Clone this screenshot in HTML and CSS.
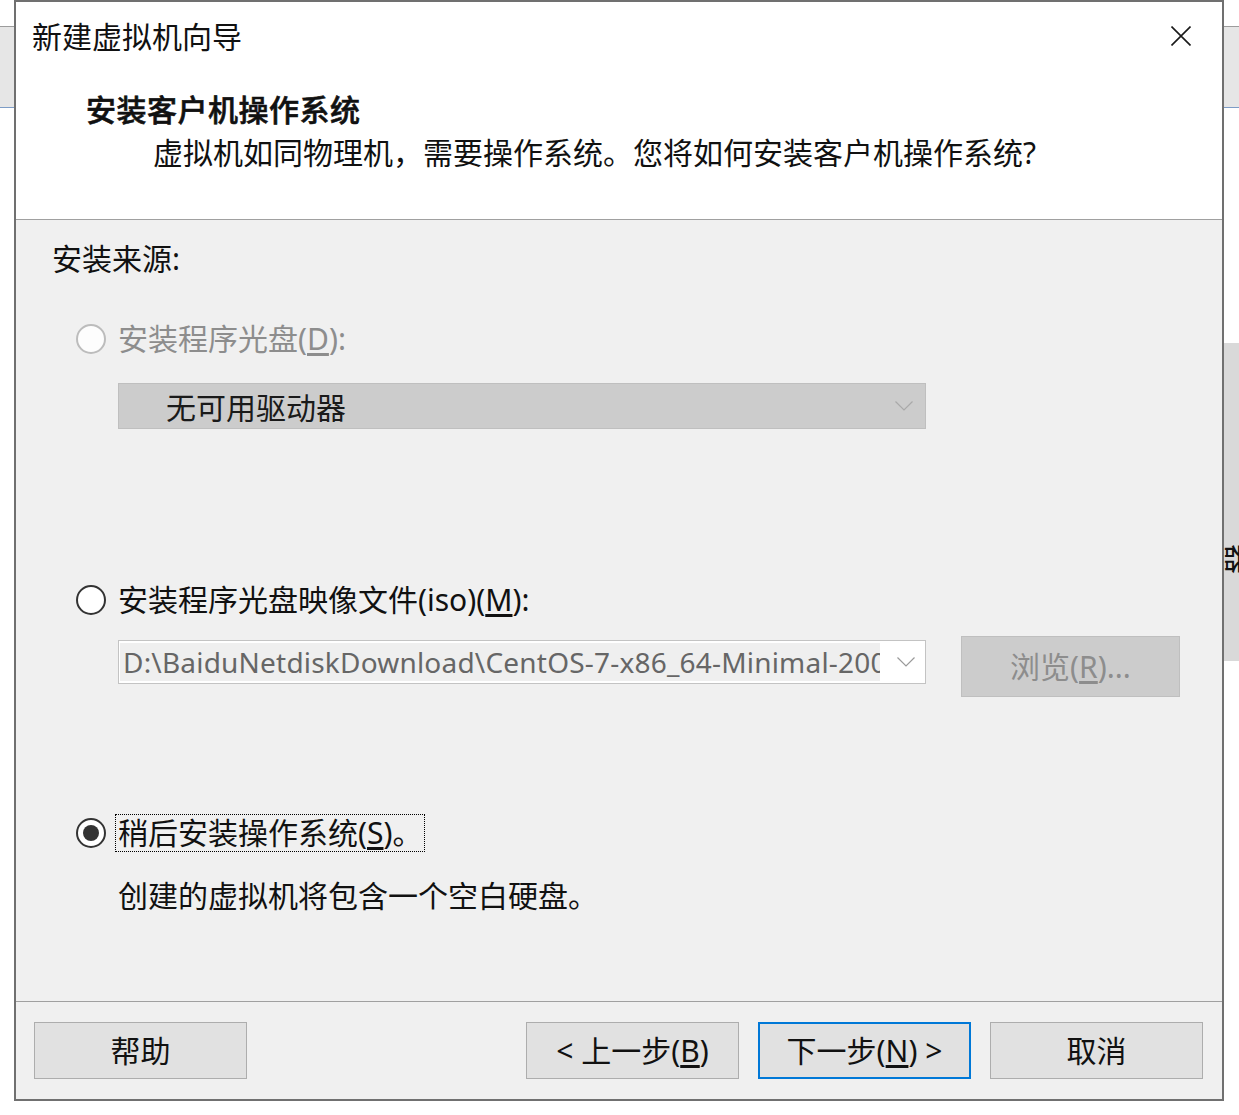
FILE: index.html
```html
<!DOCTYPE html>
<html lang="zh-CN">
<head>
<meta charset="utf-8">
<title>新建虚拟机向导</title>
<link rel="stylesheet" href="styles.css">
</head>
<body>
<div class="screen">
  <div class="side side-left"><div class="band"></div></div>
  <div class="dialog">
    <header class="head">
      <div class="titlebar">
        <span class="title">新建虚拟机向导</span>
        <svg class="close" width="20" height="20" viewBox="0 0 20 20"><path d="M0.5 0.5 L19.5 19.5 M19.5 0.5 L0.5 19.5" stroke="#1a1a1a" stroke-width="1.6" fill="none"/></svg>
      </div>
      <h1 class="heading">安装客户机操作系统</h1>
      <p class="subtitle">虚拟机如同物理机，需要操作系统。您将如何安装客户机操作系统?</p>
    </header>
    <main class="content">
      <div class="section-label">安装来源:</div>
      <div class="option option-first is-disabled"><span class="radio"></span><span class="label">安装程序光盘(<u>D</u>):</span></div>
      <div class="select">
        <span class="select-text">无可用驱动器</span>
        <svg class="chevron" width="18" height="10" viewBox="0 0 18 10"><path d="M0.5 0.5 L9 9 L17.5 0.5" stroke="#a9a9a9" stroke-width="1.2" fill="none"/></svg>
      </div>
      <div class="option option-iso"><span class="radio"></span><span class="label">安装程序光盘映像文件(iso)(<u>M</u>):</span></div>
      <div class="iso-row">
        <div class="combo">
          <span class="combo-text">D:\BaiduNetdiskDownload\CentOS-7-x86_64-Minimal-2009.iso</span>
          <span class="combo-arrow"><svg class="chevron" width="18" height="10" viewBox="0 0 18 10"><path d="M0.5 0.5 L9 9 L17.5 0.5" stroke="#9a9a9a" stroke-width="1.2" fill="none"/></svg></span>
        </div>
        <button class="btn btn-browse">浏览(<u>R</u>)...</button>
      </div>
      <div class="option option-later is-checked"><span class="radio"></span><span class="label focus">稍后安装操作系统(<u>S</u>)。</span></div>
      <p class="desc">创建的虚拟机将包含一个空白硬盘。</p>
    </main>
    <footer class="foot">
      <button class="btn">帮助</button>
      <div class="nav">
        <button class="btn">&lt; 上一步(<u>B</u>)</button>
        <button class="btn btn-default">下一步(<u>N</u>) &gt;</button>
        <button class="btn">取消</button>
      </div>
    </footer>
  </div>
  <div class="side side-right">
    <div class="band"></div>
    <div class="panel"><span class="vert">器</span></div>
  </div>
</div>
</body>
</html>
```
FILE: styles.css
```css
* { box-sizing: border-box; }
html, body { margin: 0; padding: 0; }
body {
  background: #ffffff;
  font-family: "Noto Sans", "Noto Sans CJK SC", sans-serif;
  color: #111111;
  width: 1239px;
  height: 1115px;
  overflow: hidden;
}
.screen {
  display: flex;
  align-items: flex-start;
  width: 1239px;
  height: 1115px;
}
.side {
  flex: 1 1 0;
  height: 1115px;
  overflow: hidden;
  display: flex;
  flex-direction: column;
}
.side-left { flex: 0 0 14px; }
.side-right { flex: 0 0 15px; }
.band {
  margin-top: 26px;
  height: 82px;
  background: #e6e6e6;
  border-top: 1px solid #9c9c9c;
  border-bottom: 1px solid #7d9cc6;
}
.panel {
  margin-top: 235px;
  height: 318px;
  background: #d9d9d9;
  padding-top: 201px;
  padding-left: 2px;
  overflow: hidden;
}
.vert {
  display: block;
  writing-mode: vertical-rl;
  text-orientation: sideways;
  font-family: "Noto Sans CJK SC", sans-serif;
  font-size: 30px;
  line-height: 30px;
  width: 30px;
  color: #111;
}
.dialog {
  flex: 0 0 1210px;
  width: 1210px;
  height: 1101px;
  border: 2px solid #707070;
  display: flex;
  flex-direction: column;
  background: #f0f0f0;
}
.head {
  height: 218px;
  background: #ffffff;
  border-bottom: 1px solid #a0a0a0;
  padding-top: 13px;
}
.titlebar {
  display: flex;
  justify-content: space-between;
  align-items: center;
  height: 40px;
  padding-left: 16px;
  padding-right: 31px;
}
.title {
  font-family: "Noto Sans CJK SC", sans-serif;
  font-size: 30px;
  line-height: 40px;
}
.close { display: block; margin-top: 2px; }
.heading {
  margin: 35px 0 0 70px;
  font-size: 30px;
  line-height: 40px;
  font-weight: 500;
  letter-spacing: 0.5px;
  -webkit-text-stroke: 0.6px #111111;
}
.subtitle {
  margin: 3px 0 0 137px;
  font-size: 30px;
  line-height: 40px;
}
.content {
  height: 782px;
  border-bottom: 1px solid #a0a0a0;
  padding-top: 19px;
}
.section-label {
  padding-left: 36px;
  font-size: 30px;
  line-height: 40px;
}
.option {
  display: flex;
  align-items: center;
  height: 40px;
  padding-left: 60px;
  font-size: 30px;
  line-height: 40px;
}
.option-first { margin-top: 40px; }
.option-iso { margin-top: 151px; }
.option-later { margin-top: 116px; }
.radio {
  flex: 0 0 30px;
  width: 30px;
  height: 30px;
  border: 2px solid #333333;
  border-radius: 50%;
  background: #ffffff;
  margin-right: 12px;
  display: flex;
  align-items: center;
  justify-content: center;
}
.is-disabled .radio { border-color: #bcbcbc; background: #fdfdfd; }
.is-disabled .label { color: #8d8d8d; }
.is-checked .radio { margin-right: 9px; }
.is-checked .radio::after {
  content: "";
  width: 16px;
  height: 16px;
  border-radius: 50%;
  background: #333333;
}
.label u { text-underline-offset: 3px; }
.focus {
  display: inline-block;
  height: 38px;
  line-height: 36px;
  border: 1px dotted #000000;
  padding: 0 2px 0 2px;
}
.select {
  margin: 24px 0 0 102px;
  width: 808px;
  height: 46px;
  background: #cccccc;
  border: 1px solid #bfbfbf;
  display: flex;
  align-items: center;
  justify-content: space-between;
  padding-left: 47px;
  padding-right: 12px;
}
.select-text {
  font-family: "Noto Sans CJK SC", sans-serif;
  font-size: 30px;
  line-height: 44px;
  color: #1a1a1a;
}
.chevron { display: block; }
.iso-row {
  display: flex;
  align-items: flex-start;
  margin: 16px 0 0 102px;
  gap: 35px;
}
.combo {
  margin-top: 4px;
  width: 808px;
  height: 44px;
  background: #ffffff;
  border: 1px solid #c3c3c3;
  display: flex;
  align-items: center;
  padding: 1px;
}
.combo-text {
  flex: 0 0 760px;
  height: 38px;
  background: #efefef;
  color: #666666;
  font-size: 28px;
  line-height: 38px;
  padding-left: 3px;
  white-space: nowrap;
  overflow: hidden;
  letter-spacing: 0.2px;
}
.combo-arrow {
  flex: 1;
  display: flex;
  justify-content: center;
  padding-left: 8px;
}
.btn {
  font-family: "Noto Sans", "Noto Sans CJK SC", sans-serif;
  font-size: 30px;
  line-height: 40px;
  color: #111111;
  width: 213px;
  height: 57px;
  background: #e1e1e1;
  border: 1px solid #adadad;
  padding: 0;
  margin: 0;
}
.btn u { text-underline-offset: 3px; }
.btn-browse {
  width: 219px;
  height: 61px;
  background: #cccccc;
  border-color: #bfbfbf;
  color: #8d8d8d;
}
.btn-default { border: 2px solid #0078d7; }
.desc {
  margin: 23px 0 0 102px;
  font-size: 30px;
  line-height: 40px;
}
.foot {
  flex: 1;
  display: flex;
  justify-content: space-between;
  align-items: flex-start;
  padding: 20px 19px 0 18px;
}
.nav {
  display: flex;
  gap: 19px;
}
```
